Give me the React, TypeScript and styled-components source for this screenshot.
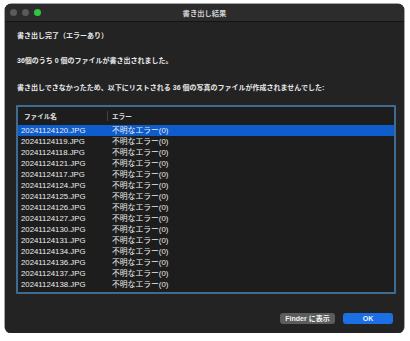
import React from 'react';
import styled, { createGlobalStyle } from 'styled-components';

const GlobalStyle = createGlobalStyle`
  html, body {
    margin: 0;
    padding: 0;
    background: #ffffff;
  }
  body {
    font-family: "Liberation Sans", "Noto Sans CJK JP", sans-serif;
    -webkit-font-smoothing: antialiased;
  }
`;

const Window = styled.div`
  width: 399px;
  height: 329px;
  margin: 4px 0 0 5px;
  background: #232323;
  border-radius: 6px;
  box-shadow: 0 0 0 0.5px #4a4a4a;
  display: flex;
  flex-direction: column;
  overflow: hidden;
`;

const TitleBar = styled.div`
  height: 17px;
  flex-shrink: 0;
  display: flex;
  align-items: center;
  position: relative;
  background: #2c2c2c;
  border-bottom: 1px solid #141414;
`;

const Lights = styled.div`
  display: flex;
  gap: 5px;
  padding-left: 5px;
`;

const Light = styled.span<{ $color: string }>`
  width: 7px;
  height: 7px;
  border-radius: 50%;
  background: ${(p) => p.$color};
`;

const Title = styled.div`
  flex: 1;
  text-align: center;
  margin-right: 36px;
  color: #cfcfcf;
  font-size: 7.3px;
  font-weight: 700;
  font-family: "Noto Sans CJK JP", sans-serif;
`;

const Body = styled.div`
  flex: 1;
  display: flex;
  flex-direction: column;
  padding: 9px 9px 9px 12px;
`;

const Message = styled.p<{ $gap: number }>`
  margin: ${(p) => p.$gap}px 0 0;
  height: 10px;
  line-height: 10px;
  color: #e9e9e9;
  font-size: 7px;
  font-weight: 700;
  font-family: "Liberation Sans", "Noto Sans CJK JP", sans-serif;
  white-space: nowrap;
`;

const TableFrame = styled.div`
  margin-top: 12px;
  margin-left: -1px;
  width: 376px;
  height: 185px;
  border: 2px solid #3e6b92;
  border-radius: 1px;
  background: #1d1d1d;
  display: flex;
  flex-direction: column;
`;

const HeaderRow = styled.div`
  height: 18px;
  display: grid;
  grid-template-columns: 89px 1fr;
  align-items: center;
  color: #e0e0e0;
  font-size: 6.6px;
  font-weight: 700;
  font-family: "Noto Sans CJK JP", sans-serif;
`;

const HeaderCell = styled.div<{ $divider?: boolean }>`
  padding-left: ${(p) => (p.$divider ? 4 : 6)}px;
  padding-top: 1px;
  border-left: ${(p) => (p.$divider ? '1px solid #444' : 'none')};
  line-height: 9px;
`;

const Row = styled.div<{ $selected?: boolean }>`
  height: 11px;
  display: grid;
  grid-template-columns: 89px 1fr;
  align-items: center;
  background: ${(p) => (p.$selected ? '#0f5dcc' : 'transparent')};
  color: #ececec;
  font-size: 7.8px;
  font-family: "Liberation Sans", "Noto Sans CJK JP", sans-serif;
`;

const Cell = styled.div<{ $pad: number }>`
  padding-left: ${(p) => p.$pad}px;
  white-space: nowrap;
  line-height: 11px;
`;

const Footer = styled.div`
  margin-top: auto;
  display: flex;
  justify-content: flex-end;
  gap: 8px;
  padding-right: 2px;
`;

const Button = styled.button<{ $primary?: boolean }>`
  height: 11px;
  width: ${(p) => (p.$primary ? 50 : 55)}px;
  padding: 0;
  border: none;
  border-radius: 3px;
  background: ${(p) => (p.$primary ? '#1b6ee3' : '#5c5c5c')};
  color: #f2f2f2;
  font-size: 7px;
  font-weight: 700;
  font-family: "Liberation Sans", "Noto Sans CJK JP", sans-serif;
  line-height: 11px;
`;

const files = [
  '20241124120.JPG',
  '20241124119.JPG',
  '20241124118.JPG',
  '20241124121.JPG',
  '20241124117.JPG',
  '20241124124.JPG',
  '20241124125.JPG',
  '20241124126.JPG',
  '20241124127.JPG',
  '20241124130.JPG',
  '20241124131.JPG',
  '20241124134.JPG',
  '20241124136.JPG',
  '20241124137.JPG',
  '20241124138.JPG',
];

const App: React.FunctionComponent = () => (
  <>
    <GlobalStyle />
    <Window>
      <TitleBar>
        <Lights>
          <Light $color="#5a5a5a" />
          <Light $color="#5a5a5a" />
          <Light $color="#2bc840" />
        </Lights>
        <Title>書き出し結果</Title>
      </TitleBar>
      <Body>
        <Message $gap={0}>書き出し完了（エラーあり）</Message>
        <Message $gap={15}>36個のうち 0 個のファイルが書き出されました。</Message>
        <Message $gap={17}>
          書き出しできなかったため、以下にリストされる 36 個の写真のファイルが作成されませんでした:
        </Message>
        <TableFrame>
          <HeaderRow>
            <HeaderCell>ファイル名</HeaderCell>
            <HeaderCell $divider>エラー</HeaderCell>
          </HeaderRow>
          {files.map((name, i) => (
            <Row key={name} $selected={i === 0}>
              <Cell $pad={3}>{name}</Cell>
              <Cell $pad={5}>不明なエラー(0)</Cell>
            </Row>
          ))}
        </TableFrame>
        <Footer>
          <Button>Finder に表示</Button>
          <Button $primary>OK</Button>
        </Footer>
      </Body>
    </Window>
  </>
);

export default App;
